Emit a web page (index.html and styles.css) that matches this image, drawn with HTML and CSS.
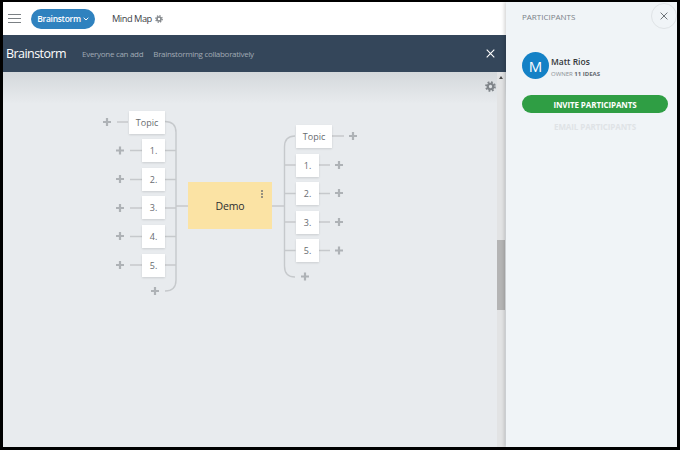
FILE: index.html
```html
<!DOCTYPE html>
<html>
<head>
  <meta charset="UTF-8">
  <title>Brainstorm - Mind Map</title>
  <link rel="stylesheet" href="styles.css">
</head>
<body>
  <svg class="defs" width="0" height="0">
    <symbol id="gear" viewBox="0 0 20 20">
      <circle cx="10" cy="10" r="5" fill="none" stroke="currentColor" stroke-width="4"/>
      <circle cx="10" cy="10" r="8" fill="none" stroke="currentColor" stroke-width="3.5" stroke-dasharray="3.3 2.98"/>
    </symbol>
  </svg>

  <div class="app">
    <div class="main">
      <header class="topbar">
        <button class="menu"><span></span><span></span><span></span></button>
        <button class="pill">Brainstorm
          <svg class="chev" width="6" height="4" viewBox="0 0 6 4"><path d="M.7.8 3 3 5.3.8" fill="none" stroke="#fff"/></svg>
        </button>
        <span class="map-name">Mind Map</span>
        <svg class="gear-small" width="8" height="8"><use href="#gear"/></svg>
      </header>

      <div class="titlebar">
        <h1>Brainstorm</h1>
        <span class="sub sub-first">Everyone can add</span>
        <span class="sub">Brainstorming collaboratively</span>
        <svg class="bar-close" width="9" height="9" viewBox="0 0 9 9"><path d="M.7.7l7.6 7.6M8.3.7.7 8.3" stroke="#fff" stroke-width="1.1"/></svg>
      </div>

      <div class="canvas">
        <svg class="links" width="503" height="375" viewBox="3 72 503 375">
          <g fill="none" stroke="#c6c9cc" stroke-width="1.4">
            <path d="M165 121.500q11 0 11 11V280q0 11-11 11"/>
            <path d="M117 122h11M130 150.500h12M130 179.500h12M130 208h12M130 236.500h12M130 265h12"/>
            <path d="M165 150.500h11M165 179.500h11M165 208h11M165 236.500h11M165 265h11M176 206h12"/>
            <path d="M272 206h12.500M295 136q-10.500 0-10.500 11v119q0 11 10.500 11"/>
            <path d="M284.500 165h11M284.500 193.500h11M284.500 222h11M284.500 250.500h11"/>
            <path d="M332 136h12M318 165h12M318 193.500h12M318 222h12M318 250.500h12"/>
          </g>
          <g fill="none" stroke="#aeb2b6" stroke-width="2.200">
            <path d="M103 122h8M107 118v8"/>
            <path d="M116 150.500h8M120 146.500v8"/>
            <path d="M116 179h8M120 175v8"/>
            <path d="M116 208h8M120 204v8"/>
            <path d="M116 236h8M120 232v8"/>
            <path d="M116 265h8M120 261v8"/>
            <path d="M151 291h8M155 287v8"/>
            <path d="M349 136h8M353 132v8"/>
            <path d="M335 165h8M339 161v8"/>
            <path d="M335 193h8M339 189v8"/>
            <path d="M335 222h8M339 218v8"/>
            <path d="M335 250.500h8M339 246.500v8"/>
            <path d="M301 276.500h8M305 272.500v8"/>
          </g>
        </svg>

        <div class="node topic l-topic">Topic</div>
        <div class="node item l-1">1.</div>
        <div class="node item l-2">2.</div>
        <div class="node item l-3">3.</div>
        <div class="node item l-4">4.</div>
        <div class="node item l-5">5.</div>

        <div class="center">Demo<span class="dots"><i></i><i></i><i></i></span></div>

        <div class="node topic r-topic">Topic</div>
        <div class="node item r-1">1.</div>
        <div class="node item r-2">2.</div>
        <div class="node item r-3">3.</div>
        <div class="node item r-5">5.</div>

        <svg class="gear-big" width="11" height="11"><use href="#gear"/></svg>
        <div class="scrollbar">
          <span class="arrow"></span>
          <span class="thumb"></span>
        </div>
      </div>
    </div>

    <aside class="panel">
      <div class="panel-head">
        <h2>PARTICIPANTS</h2>
        <button class="panel-close">
          <svg width="8" height="8" viewBox="0 0 8 8"><path d="M.6.6l6.800 6.800M7.400.6.6 7.400" stroke="#6d7379" stroke-width="1"/></svg>
        </button>
      </div>
      <div class="person">
        <div class="avatar">M</div>
        <div class="person-text">
          <div class="person-name">Matt Rios</div>
          <div class="person-meta">OWNER <b>11 IDEAS</b></div>
        </div>
      </div>
      <button class="invite">INVITE PARTICIPANTS</button>
      <div class="email">EMAIL PARTICIPANTS</div>
    </aside>
  </div>
</body>
</html>
```

FILE: styles.css
```css
html, body {
  margin: 0px;
  height: 100%;
}

body {
  background: #000000;
  font-family: "Open Sans", sans-serif;
  overflow: hidden;
}

button {
  border: none;
  font-family: inherit;
  padding: 0px;
}

.defs {
  position: absolute;
}

.app {
  display: flex;
  height: 445px;
  margin: 2px 3px 0px 3px;
}

.main {
  display: flex;
  flex-direction: column;
  width: 503px;
}

/* top bar */
.topbar {
  align-items: center;
  background: #ffffff;
  display: flex;
  height: 33px;
}

.menu {
  background: none;
  display: flex;
  flex-direction: column;
  gap: 3px;
  margin-left: 5px;
  width: 13px;
}

.menu span {
  background: #7b8084;
  display: block;
  height: 1px;
}

.pill {
  align-items: center;
  background: #2f82bf;
  border-radius: 10px;
  color: #ffffff;
  display: flex;
  font-size: 8.500px;
  font-weight: 600;
  gap: 2px;
  height: 20px;
  justify-content: center;
  letter-spacing: -0.3px;
  margin-left: 10px;
  width: 64px;
}

.map-name {
  color: #3e4347;
  font-size: 9.300px;
  letter-spacing: -0.5px;
  margin-left: 17px;
}

.gear-small {
  color: #85898d;
  margin-left: 3px;
}

/* dark title bar */
.titlebar {
  align-items: center;
  background: #34465a;
  color: #ffffff;
  display: flex;
  height: 37px;
  padding-left: 3px;
  position: relative;
}

h1 {
  font-size: 12.500px;
  font-weight: 400;
  letter-spacing: -0.55px;
  margin: 0px;
}

.sub {
  color: #a0aab4;
  font-size: 8px;
  letter-spacing: -0.3px;
  margin-left: 10px;
}

.sub-first {
  margin-left: 16px;
}

.bar-close {
  position: absolute;
  right: 11px;
  top: 14px;
}

/* mind map */
.canvas {
  background: linear-gradient(#d4d8db, #e8ebee 32px);
  flex: 1;
  position: relative;
}

.links {
  left: 0px;
  position: absolute;
  top: 0px;
}

.node {
  align-items: center;
  background: #ffffff;
  box-shadow: 0px 1px 2px rgba(0, 0, 0, 0.12);
  color: #686c70;
  display: flex;
  font-size: 9px;
  height: 23px;
  justify-content: center;
  position: absolute;
}

.topic {
  width: 36px;
}

.item {
  width: 23px;
}

.l-topic { left: 126px; top: 39px; }
.l-1 { left: 139px; top: 67px; }
.l-2 { left: 139px; top: 96px; }
.l-3 { left: 139px; top: 124px; }
.l-4 { left: 139px; top: 153px; }
.l-5 { left: 139px; top: 182px; }

.r-topic { left: 293px; top: 53px; }
.r-1 { left: 293px; top: 82px; }
.r-2 { left: 293px; top: 110px; }
.r-3 { left: 293px; top: 139px; }
.r-5 { left: 293px; top: 167px; }

.center {
  align-items: center;
  background: #fbe3a4;
  color: #2b2d30;
  display: flex;
  font-size: 10.500px;
  height: 47px;
  justify-content: center;
  left: 185px;
  letter-spacing: -0.2px;
  position: absolute;
  top: 110px;
  width: 84px;
}

.dots {
  display: flex;
  flex-direction: column;
  gap: 1px;
  position: absolute;
  right: 9px;
  top: 8px;
}

.dots i {
  background: #96917f;
  display: block;
  height: 2px;
  width: 2px;
}

.gear-big {
  color: #80858a;
  left: 482px;
  position: absolute;
  top: 9px;
}

.scrollbar {
  background: #e2e3e4;
  bottom: 0px;
  position: absolute;
  right: 1px;
  top: 0px;
  width: 8px;
}

.arrow {
  border-bottom: 3px solid #4a4a4a;
  border-left: 2px solid transparent;
  border-right: 2px solid transparent;
  left: 2px;
  position: absolute;
  top: 4px;
}

.thumb {
  background: #b4b4b4;
  height: 70px;
  left: 0px;
  position: absolute;
  top: 168px;
  width: 8px;
}

/* participants */
.panel {
  background: #f0f4f7;
  box-shadow: -2px 0px 3px rgba(0, 0, 0, 0.15);
  flex: 1;
  padding: 0px 9px 0px 16px;
  position: relative;
}

.panel-head {
  align-items: center;
  display: flex;
  height: 29px;
}

h2 {
  color: #7a8087;
  font-size: 8px;
  font-weight: 400;
  margin: 0px;
}

.panel-close {
  align-items: center;
  background: #f0f4f7;
  border: 1px solid #dfe3e6;
  border-radius: 50%;
  display: flex;
  height: 26px;
  justify-content: center;
  position: absolute;
  right: 0px;
  top: 1px;
  width: 26px;
}

.person {
  align-items: center;
  display: flex;
  gap: 2px;
  margin-top: 21px;
}

.person-text {
  margin-top: 3px;
}

.avatar {
  align-items: center;
  background: #1481c6;
  border-radius: 50%;
  color: #ffffff;
  display: flex;
  font-size: 15px;
  height: 27px;
  justify-content: center;
  width: 27px;
}

.person-name {
  color: #33373b;
  font-size: 8.500px;
  font-weight: 600;
}

.person-meta {
  color: #8b9096;
  font-size: 6px;
  margin-top: 3px;
}

.person-meta b {
  color: #64696f;
}

.invite {
  background: #2f9e44;
  border-radius: 9px;
  color: #ffffff;
  display: block;
  font-size: 8px;
  font-weight: 700;
  height: 18px;
  letter-spacing: -0.1px;
  margin-top: 16px;
  width: 146px;
}

.email {
  color: #dfe3e6;
  font-size: 8px;
  font-weight: 700;
  letter-spacing: -0.1px;
  margin-top: 8px;
  text-align: center;
  width: 146px;
}
```
